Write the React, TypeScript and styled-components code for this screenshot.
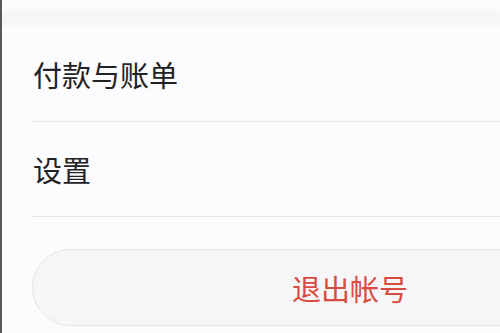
import React from 'react';
import styled, { createGlobalStyle } from 'styled-components';

const GlobalStyle = createGlobalStyle`
    html, body {
        margin: 0;
        padding: 0;
        background: #fcfbfd;
    }
    body {
        font-family: "Noto Sans CJK SC", "Noto Sans", sans-serif;
    }
`;

const Screen = styled.div`
    width: 500px;
    height: 333px;
    overflow: hidden;
    box-sizing: border-box;
    border-left: 2px solid #58575a;
    background: #fcfbfd;
`;

const TopBand = styled.div`
    margin-top: 9px;
    height: 18px;
    background: linear-gradient(#f8f7f9, #f5f4f6 60%, #f9f8fa);
`;

const Menu = styled.div`
    padding-left: 30px;
`;

const MenuRow = styled.div`
    height: 94px;
    display: flex;
    align-items: center;
    border-bottom: 1px solid #e7e6e9;
    font-size: 29px;
    color: #232224;
    padding-left: 1px;
`;

const LogoutButton = styled.button`
    margin-top: 32px;
    width: 636px;
    height: 77px;
    border-radius: 39px;
    border: 1px solid #e4e3e6;
    background: #f6f5f7;
    color: #d84c40;
    font-family: "Noto Sans CJK SC", "Noto Sans", sans-serif;
    font-size: 29px;
    display: flex;
    align-items: center;
    justify-content: center;
    padding: 0;
`;

export default function App() {
    const items = ['付款与账单', '设置'];
    return <>
        <GlobalStyle />
        <Screen>
            <TopBand />
            <Menu>
                {items.map(label => <MenuRow key={label}>{label}</MenuRow>)}
                <LogoutButton>退出帐号</LogoutButton>
            </Menu>
        </Screen>
    </>
}
